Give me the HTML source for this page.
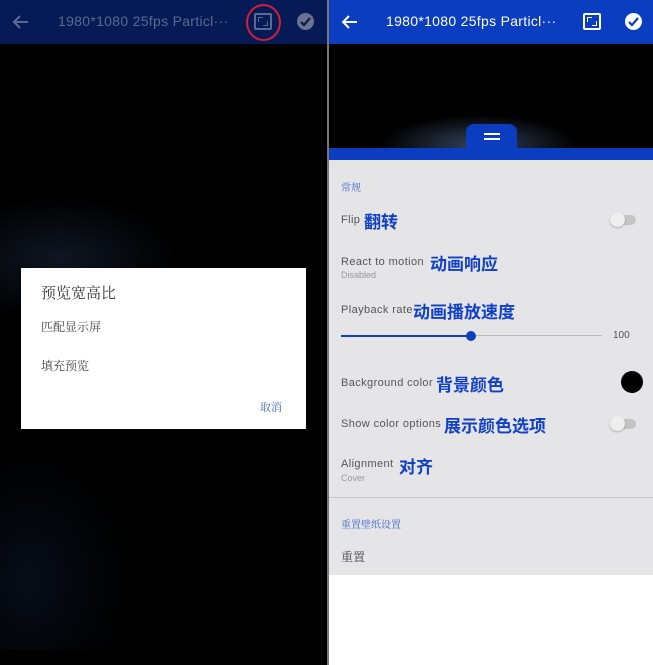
<!DOCTYPE html>
<html><head><meta charset="utf-8"><style>
*{margin:0;padding:0;box-sizing:border-box}
body{width:653px;height:665px;position:relative;overflow:hidden;background:#fff;font-family:"Liberation Sans","Noto Sans CJK SC",sans-serif}
.a{position:absolute}
.s{font-family:"Noto Serif CJK SC","Noto Sans CJK SC",serif}
.lbl{font-size:11px;color:#555;letter-spacing:.4px}
.cn{font-size:17px;font-weight:bold;color:#1040c8;font-family:"Noto Sans CJK SC",sans-serif}
.sub{font-size:9px;color:#999}
.tog{width:24px;height:10px;border-radius:5px;background:#c4c4c4}
.tog:before{content:"";position:absolute;left:-2px;top:-3px;width:15px;height:15px;border-radius:50%;background:#eee;box-shadow:0 1px 2px rgba(0,0,0,.25)}
.asp{width:18px;height:17px;border:2px solid;border-radius:2px}
.asp:before{content:"";position:absolute;left:2px;top:2px;width:4px;height:4px;border-left:1.5px solid;border-top:1.5px solid}
.asp:after{content:"";position:absolute;right:2px;bottom:2px;width:4px;height:4px;border-right:1.5px solid;border-bottom:1.5px solid}
</style></head><body>
<div class="a" style="left:0;top:0;width:327px;height:665px;background:#000"></div>
<div class="a" style="left:0;top:150px;width:327px;height:500px;background:radial-gradient(ellipse 170px 90px at 60px 110px,rgba(70,100,160,.22),transparent 70%),radial-gradient(ellipse 140px 180px at 30px 430px,rgba(40,70,130,.18),transparent 70%)"></div>
<div class="a" style="left:0;top:0;width:327px;height:44px;background:#061a55"></div>
<svg class="a" style="left:12px;top:13px" width="18" height="18" viewBox="0 0 18 18"><path d="M16 9H3M8 3L2 9l6 6" stroke="#5a6a90" stroke-width="2" fill="none"/></svg>
<div class="a" style="left:58px;top:13px;font-size:14px;color:#5a6a90;letter-spacing:.3px">1980*1080 25fps Particl···</div>
<div class="a asp" style="left:254px;top:13px;color:#5a6a90;border-color:#5a6a90"></div>
<div class="a" style="left:246px;top:4px;width:35px;height:37px;border:2px solid #d0203a;border-radius:50%"></div>
<div class="a" style="left:297px;top:13px;width:17px;height:17px;border-radius:50%;background:#6a7490"></div>
<svg class="a" style="left:297px;top:13px" width="17" height="17"><path d="M4 9l3 3 6-7" stroke="#061a55" stroke-width="2.2" fill="none"/></svg>
<div class="a" style="left:21px;top:268px;width:285px;height:161px;background:#fff;box-shadow:0 2px 6px rgba(0,0,0,.5)"></div>
<div class="a s" style="left:41px;top:282px;font-size:15px;color:#333">预览宽高比</div>
<div class="a s" style="left:41px;top:318px;font-size:12px;color:#444">匹配显示屏</div>
<div class="a s" style="left:41px;top:357px;font-size:12px;color:#444">填充预览</div>
<div class="a s" style="left:260px;top:399px;font-size:11px;color:#3a6ac8">取消</div>
<div class="a" style="left:327px;top:0;width:2px;height:665px;background:#777"></div>
<div class="a" style="left:329px;top:44px;width:324px;height:110px;background:#000"></div>
<div class="a" style="left:329px;top:90px;width:324px;height:64px;background:radial-gradient(ellipse 130px 40px at 150px 55px,rgba(110,150,210,.45),transparent 75%)"></div>
<div class="a" style="left:329px;top:0;width:324px;height:44px;background:#0a3dbf"></div>
<svg class="a" style="left:341px;top:13px" width="18" height="18" viewBox="0 0 18 18"><path d="M16 9H3M8 3L2 9l6 6" stroke="#fff" stroke-width="2" fill="none"/></svg>
<div class="a" style="left:386px;top:13px;font-size:14px;color:#fff;letter-spacing:.3px">1980*1080 25fps Particl···</div>
<div class="a asp" style="left:583px;top:13px;color:#fff;border-color:#fff"></div>
<div class="a" style="left:625px;top:13px;width:17px;height:17px;border-radius:50%;background:#fff"></div>
<svg class="a" style="left:625px;top:13px" width="17" height="17"><path d="M4 9l3 3 6-7" stroke="#0a3dbf" stroke-width="2.2" fill="none"/></svg>
<div class="a" style="left:466px;top:124px;width:51px;height:30px;background:#0a3dbf;border-radius:8px 8px 0 0"></div>
<div class="a" style="left:484px;top:133px;width:16px;height:2px;background:#fff"></div>
<div class="a" style="left:484px;top:138px;width:16px;height:2px;background:#fff"></div>
<div class="a" style="left:329px;top:148px;width:324px;height:12px;background:#0a3dbf"></div>
<div class="a" style="left:329px;top:160px;width:324px;height:415px;background:#e5e5e7"></div>
<div class="a s" style="left:341px;top:179px;font-size:10px;color:#3a6ac8">常规</div>
<div class="a lbl" style="left:341px;top:214px">Flip</div>
<div class="a cn" style="left:364px;top:208px">翻转</div>
<div class="a tog" style="left:612px;top:215px"></div>
<div class="a lbl" style="left:341px;top:256px">React to motion</div>
<div class="a cn" style="left:430px;top:250px">动画响应</div>
<div class="a sub" style="left:341px;top:270px">Disabled</div>
<div class="a lbl" style="left:341px;top:304px">Playback rate</div>
<div class="a cn" style="left:413px;top:298px">动画播放速度</div>
<div class="a" style="left:341px;top:335px;width:130px;height:2px;background:#1040c0"></div>
<div class="a" style="left:471px;top:335px;width:131px;height:1px;background:#bbb"></div>
<div class="a" style="left:466px;top:331px;width:10px;height:10px;border-radius:50%;background:#1040c0"></div>
<div class="a" style="left:613px;top:330px;font-size:10px;color:#555">100</div>
<div class="a lbl" style="left:341px;top:377px">Background color</div>
<div class="a cn" style="left:436px;top:371px">背景颜色</div>
<div class="a" style="left:621px;top:371px;width:22px;height:22px;border-radius:50%;background:#000"></div>
<div class="a lbl" style="left:341px;top:418px">Show color options</div>
<div class="a cn" style="left:444px;top:412px">展示颜色选项</div>
<div class="a tog" style="left:612px;top:419px"></div>
<div class="a lbl" style="left:341px;top:458px">Alignment</div>
<div class="a cn" style="left:399px;top:453px">对齐</div>
<div class="a sub" style="left:341px;top:473px">Cover</div>
<div class="a" style="left:329px;top:497px;width:324px;height:1px;background:#c8c8c8"></div>
<div class="a s" style="left:341px;top:516px;font-size:10px;color:#3a6ac8">重置壁纸设置</div>
<div class="a s" style="left:341px;top:548px;font-size:12px;color:#444">重置</div>
</body></html>
